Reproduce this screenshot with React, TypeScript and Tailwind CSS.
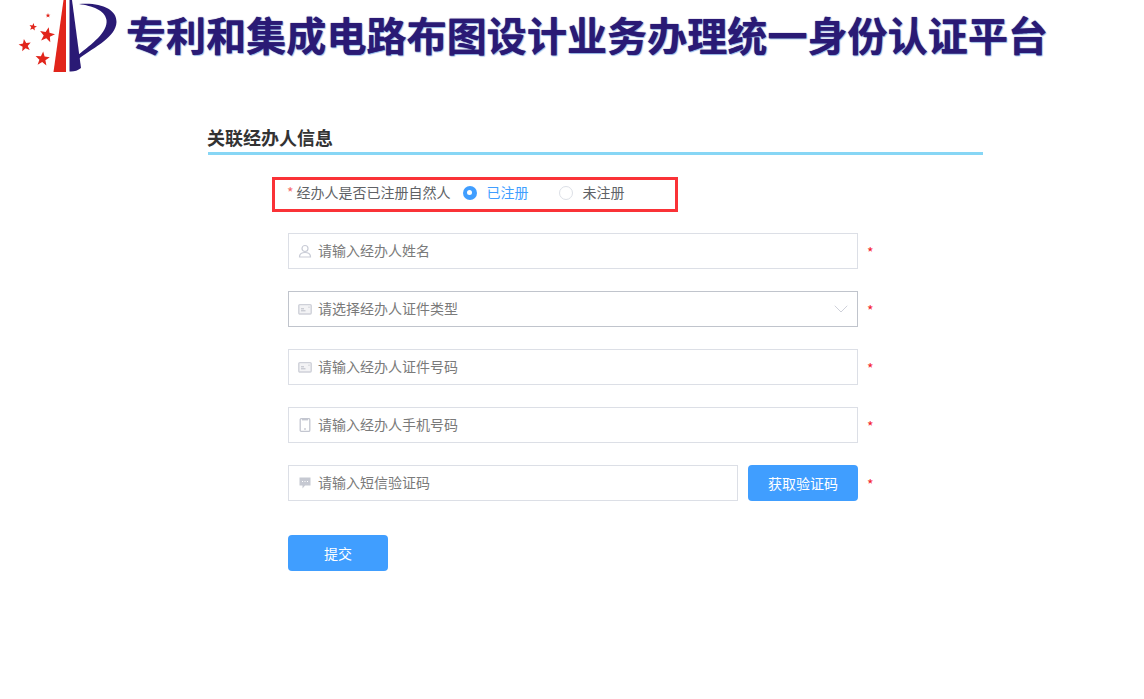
import React from 'react';
import { ChevronDown } from 'lucide-react';

const Star: React.FC<{ x: number; y: number; r: number; rotate?: number }> = ({ x, y, r, rotate = 0 }) => {
  const points = Array.from({ length: 10 }, (_, i) => {
    const radius = i % 2 === 0 ? r : r * 0.42;
    const angle = ((i * 36 - 90 + rotate) * Math.PI) / 180;
    return `${(x + radius * Math.cos(angle)).toFixed(1)},${(y + radius * Math.sin(angle)).toFixed(1)}`;
  }).join(' ');
  return <polygon points={points} fill="#e1251b" />;
};

const Logo: React.FC = () => (
  <svg width="104" height="72" viewBox="14 0 104 72" className="shrink-0">
    <Star x={47} y={35} r={8} rotate={12} />
    <Star x={25} y={45.5} r={6.5} rotate={-10} />
    <Star x={42.5} y={59} r={7.5} rotate={5} />
    <Star x={33} y={27} r={4} rotate={10} />
    <Star x={48} y={15.5} r={2.5} />
    <polygon points="63.5,0 66,0 66,72 53.5,72" fill="#e1251b" />
    <path d="M69.5 0 L72 0 L81 68 Q76 72 69.5 71.5 Z" fill="#2a1a75" />
    <path
      d="M79 4 C100 2 117 9 116.5 22 C116 37 96 46 78.5 59 L78 55 C92 44 108 32 106.5 20 C105 10 92 6 79 4 Z"
      fill="#2a1a75"
    />
  </svg>
);

const UserIcon = () => (
  <svg width="14" height="14" viewBox="0 0 14 14" fill="none" stroke="#c9ccd6" strokeWidth="1.2">
    <circle cx="7" cy="4.5" r="3" />
    <path d="M1.5 13 C1.5 9.5 4 8.5 7 8.5 C10 8.5 12.5 9.5 12.5 13 Z" />
  </svg>
);

const CardIcon = () => (
  <svg width="14" height="14" viewBox="0 0 14 14" fill="none">
    <rect x="0.8" y="2.6" width="12.4" height="9.4" rx="1" fill="#f3f3f5" stroke="#cfd1d9" strokeWidth="1.4" />
    <path d="M3 8.8 H7.5 M3 6.8 H6" stroke="#b9bcc6" strokeWidth="1" />
    <path d="M10.5 5.2 H11.5" stroke="#b9bcc6" strokeWidth="1" />
  </svg>
);

const PhoneIcon = () => (
  <svg width="14" height="14" viewBox="0 0 14 14" fill="none">
    <rect x="2.2" y="0.6" width="9.6" height="12.8" rx="1.2" stroke="#c3c6d0" strokeWidth="1.3" />
    <path d="M4 1 H10 V2.4 H4 Z" fill="#c3c6d0" />
    <circle cx="7" cy="11" r="0.8" fill="#a9acb8" />
  </svg>
);

const MessageIcon = () => (
  <svg width="14" height="14" viewBox="0 0 14 14">
    <path d="M1.5 1.5 H12.5 V9.5 H7 L4.5 12.5 V9.5 H1.5 Z" fill="#c6c9d2" />
    <path d="M4 5.5 H5 M6.5 5.5 H7.5 M9 5.5 H10" stroke="#fff" strokeWidth="1" />
  </svg>
);

const Required = () => <span className="ml-[9px] w-[12px] pt-[2px] text-[14px] leading-none text-[#f5222d]">*</span>;

const Field: React.FC<{
  icon: React.ReactNode;
  placeholder: string;
  select?: boolean;
}> = ({ icon, placeholder, select }) => (
  <div
    className={`flex h-[36px] w-[570px] items-center border bg-white pl-[9px] pr-[4px] ${
      select ? 'border-[#c0c4cc]' : 'border-[#dcdfe6]'
    }`}
  >
    <span className="flex w-[14px] justify-center">{icon}</span>
    <span className="ml-[6px] flex-1 pb-[2px] text-[14px] text-[#7a7a7a]">{placeholder}</span>
    {select && <ChevronDown className="h-[24px] w-[24px] text-[#c9ccd6]" strokeWidth={0.9} />}
  </div>
);

const App: React.FC = () => (
  <div
    className="h-[699px] w-[1144px] overflow-hidden bg-white"
    style={{ fontFamily: '"Noto Sans CJK SC", "Liberation Sans", sans-serif' }}
  >
    <header className="flex h-[72px] items-start pl-[14px]">
      <Logo />
      <h1 className="ml-[8px] mt-[10px] whitespace-nowrap text-[40px] font-bold leading-[48px] tracking-[0.09px] text-[#2a1a75] [text-shadow:0_0_1px_#2a1a75,1px_1px_1px_#9cc4ee]">
        专利和集成电路布图设计业务办理统一身份认证平台
      </h1>
    </header>

    <main className="ml-[208px] mt-[54px] w-[775px]">
      <div className="h-[29px] border-b-[3px] border-[#87d6f5]">
        <h2 className="-ml-px text-[18px] font-bold leading-[22px] text-[#333333]">关联经办人信息</h2>
      </div>

      <div className="ml-[64px] mt-[22px] flex h-[35px] w-[406px] items-center border-[3px] border-[#fa3237] pb-[4px] pl-[12px] text-[14px] text-[#606266]">
        <span className="mr-[3px] text-[#f56c6c]">*</span>
        <span>经办人是否已注册自然人</span>
        <span className="ml-[12px] flex h-[14px] w-[14px] items-center justify-center rounded-full bg-[#409eff]">
          <span className="h-[5px] w-[5px] rounded-full bg-white" />
        </span>
        <span className="ml-[10px] text-[#409eff]">已注册</span>
        <span className="ml-[30px] h-[14px] w-[14px] rounded-full border border-[#dcdfe6] bg-white" />
        <span className="ml-[10px]">未注册</span>
      </div>

      <div className="ml-[80px] mt-[21px] flex flex-col gap-[22px]">
        <div className="flex items-center">
          <Field icon={<UserIcon />} placeholder="请输入经办人姓名" />
          <Required />
        </div>
        <div className="flex items-center">
          <Field icon={<CardIcon />} placeholder="请选择经办人证件类型" select />
          <Required />
        </div>
        <div className="flex items-center">
          <Field icon={<CardIcon />} placeholder="请输入经办人证件号码" />
          <Required />
        </div>
        <div className="flex items-center">
          <Field icon={<PhoneIcon />} placeholder="请输入经办人手机号码" />
          <Required />
        </div>
        <div className="flex items-center">
          <div className="flex h-[36px] w-[450px] items-center border border-[#dcdfe6] bg-white pl-[9px]">
            <span className="flex w-[14px] justify-center">
              <MessageIcon />
            </span>
            <span className="ml-[6px] pb-[2px] text-[14px] text-[#7a7a7a]">请输入短信验证码</span>
          </div>
          <button className="ml-[10px] h-[36px] w-[110px] rounded-[4px] bg-[#409eff] text-[14px] text-white">
            获取验证码
          </button>
          <Required />
        </div>
      </div>

      <button className="ml-[80px] mt-[34px] h-[36px] w-[100px] rounded-[4px] bg-[#409eff] text-[14px] text-white">
        提交
      </button>
    </main>
  </div>
);

export default App;
